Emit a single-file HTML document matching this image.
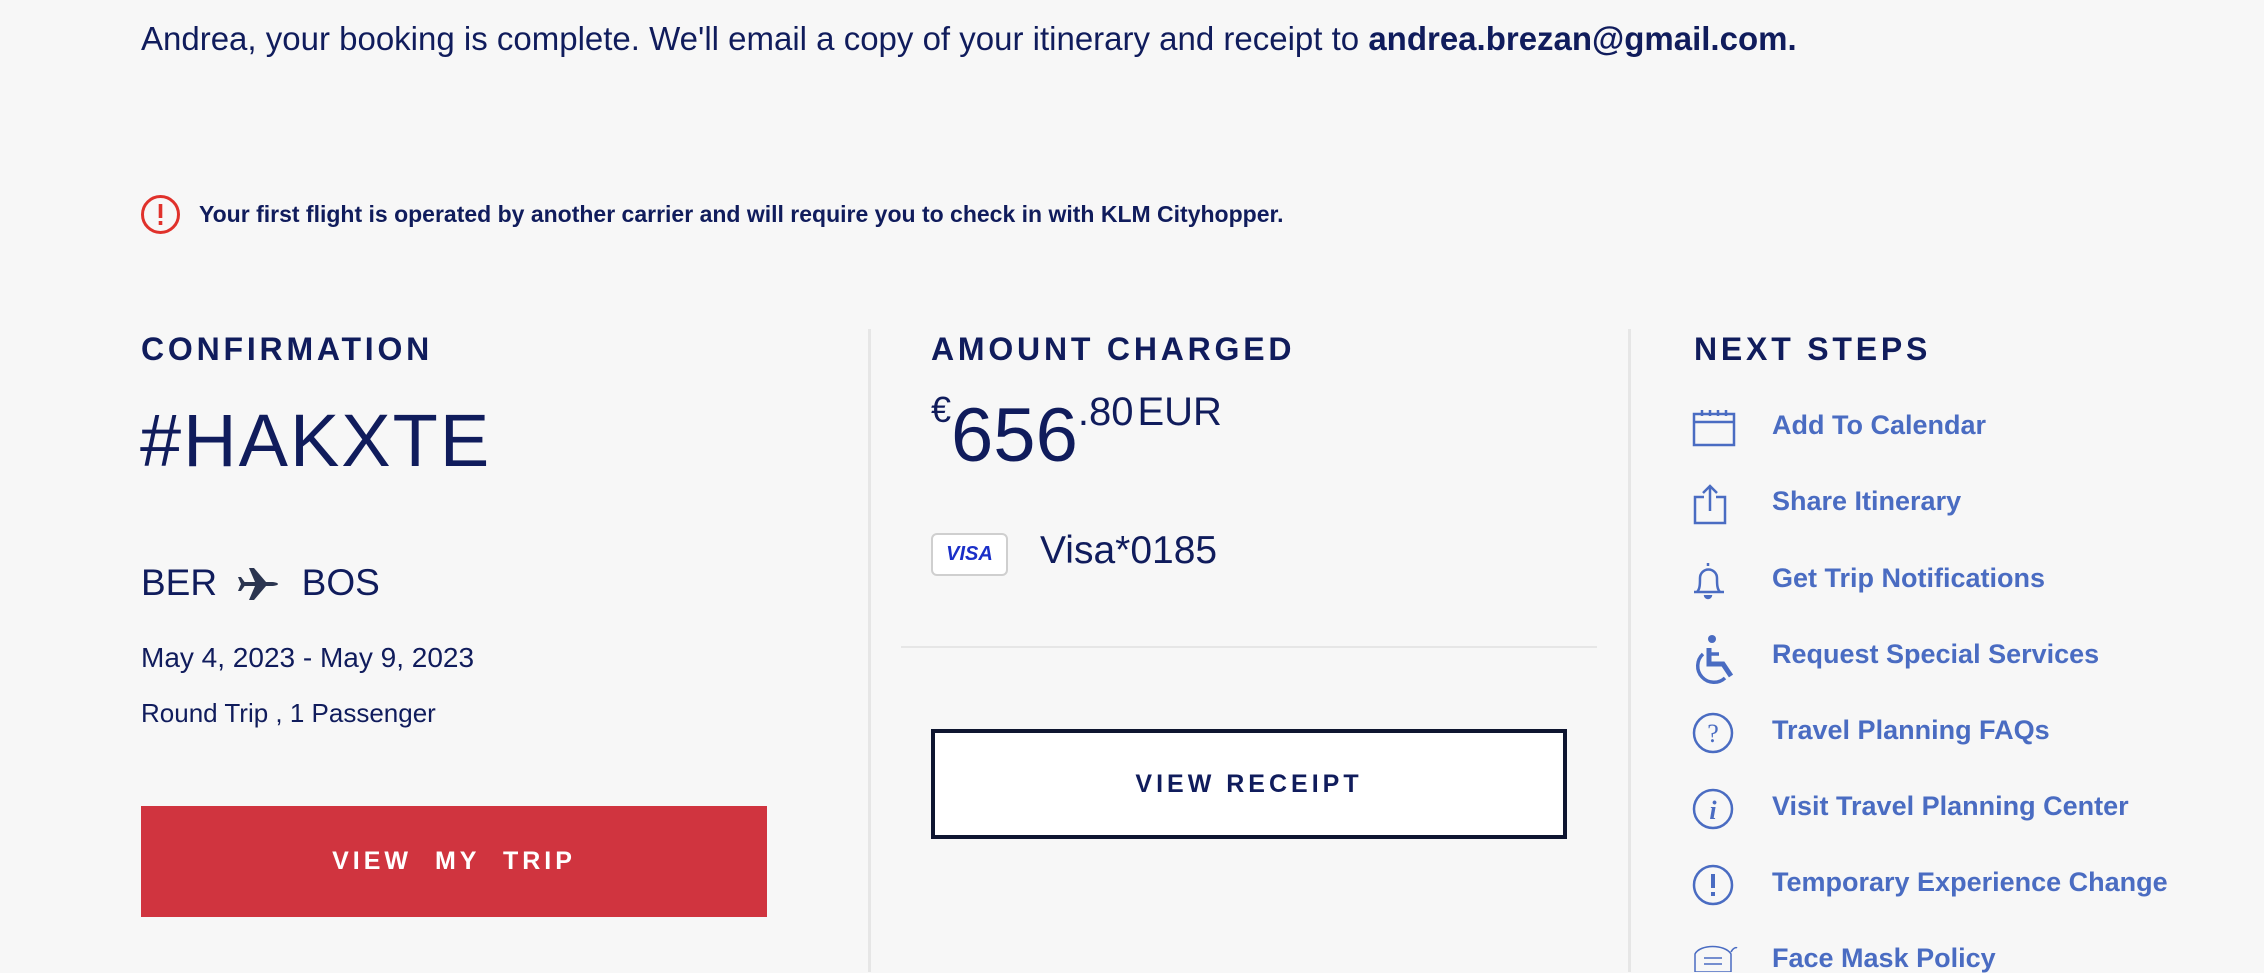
<!DOCTYPE html>
<html><head><meta charset="utf-8"><style>
*{margin:0;padding:0;box-sizing:border-box}
body{width:2264px;height:972px;background:#f7f7f7;font-family:"Liberation Sans",sans-serif;color:#101c5c;position:relative;overflow:hidden}
.a{position:absolute;white-space:nowrap}
.h{font-weight:bold;font-size:32px;letter-spacing:3.8px;line-height:1}
.link{color:#4a6cc2;font-weight:bold;font-size:27px;left:1772px;line-height:1}
.ic{position:absolute;left:1692px}
</style></head><body>
<div class="a" style="left:141px;top:20px;font-size:33px;line-height:38px">Andrea, your booking is complete. We'll email a copy of your itinerary and receipt to <b>andrea.brezan@gmail.com.</b></div>

<svg class="a" style="left:140px;top:194px" width="41" height="41" viewBox="0 0 41 41"><circle cx="20.5" cy="20.5" r="18" fill="none" stroke="#e0312b" stroke-width="3"/><rect x="18.7" y="10" width="3.6" height="14" fill="#e0312b"/><rect x="18.7" y="27" width="3.6" height="4" fill="#e0312b"/></svg>
<div class="a" style="left:199px;top:200px;font-size:23px;font-weight:bold;line-height:28px">Your first flight is operated by another carrier and will require you to check in with KLM Cityhopper.</div>

<div class="a" style="left:868px;top:329px;width:3px;height:643px;background:#e6e6e6"></div>
<div class="a" style="left:1628px;top:329px;width:3px;height:643px;background:#e6e6e6"></div>

<div class="a h" style="left:141px;top:333px">CONFIRMATION</div>
<div class="a" style="left:140px;top:402px;font-size:74px;line-height:78px;letter-spacing:2px">#HAKXTE</div>
<div class="a" style="left:141px;top:563px;font-size:37px;line-height:40px">BER <svg width="44" height="36" viewBox="0 0 44 36" style="vertical-align:-6px;margin:0 10px"><path d="M4 17h30c4 0 7 1 7 2s-3 2-7 2H4z M18 17L12 3h5l12 14z M18 21l-6 14h5l12-14z M4 19l-3-7h3l5 7-5 7H1z" fill="#2b3550"/></svg> BOS</div>
<div class="a" style="left:141px;top:642px;font-size:28px;line-height:32px">May 4, 2023 - May 9, 2023</div>
<div class="a" style="left:141px;top:698px;font-size:26px;line-height:30px">Round Trip , 1 Passenger</div>
<div class="a" style="left:141px;top:806px;width:626px;height:111px;background:#d0343f;color:#fff;font-weight:bold;font-size:25px;letter-spacing:4px;text-align:center;line-height:111px;word-spacing:12px">VIEW MY TRIP</div>

<div class="a h" style="left:931px;top:333px">AMOUNT CHARGED</div>
<div class="a" style="left:931px;top:392px;line-height:1"><span style="font-size:36px;vertical-align:top">€</span><span style="font-size:76px;vertical-align:top;display:inline-block;margin-top:6px">656</span><span style="font-size:40px;vertical-align:top">.80</span><span style="font-size:40px;vertical-align:top;margin-left:4px">EUR</span></div>
<div class="a" style="left:931px;top:533px;width:77px;height:43px;border:2px solid #cfcfcf;border-radius:6px;background:#fff;color:#1a2fc8;font-style:italic;font-weight:bold;font-size:20px;text-align:center;line-height:39px">VISA</div>
<div class="a" style="left:1040px;top:530px;font-size:39px;line-height:42px">Visa*0185</div>
<div class="a" style="left:901px;top:646px;width:696px;height:2px;background:#e6e6e6"></div>
<div class="a" style="left:931px;top:729px;width:636px;height:110px;border:4px solid #0e1530;background:#fff;font-weight:bold;font-size:25px;letter-spacing:4px;text-align:center;line-height:102px">VIEW RECEIPT</div>

<div class="a h" style="left:1694px;top:333px">NEXT STEPS</div>
<svg class="ic" style="top:408px" width="44" height="40" viewBox="0 0 44 40" fill="none" stroke="#4a6cc2" stroke-width="2.5"><rect x="2" y="6" width="40" height="31"/><line x1="2" y1="14" x2="42" y2="14"/><path d="M10 2v6M18 2v6M26 2v6M34 2v6"/></svg>
<div class="a link" style="top:412px">Add To Calendar</div>
<svg class="ic" style="top:483px" width="36" height="42" viewBox="0 0 36 42" fill="none" stroke="#4a6cc2" stroke-width="2.5"><path d="M12 14H3v26h30V14h-9"/><path d="M18 28V3M11 10l7-7 7 7"/></svg>
<div class="a link" style="top:488px">Share Itinerary</div>
<svg class="ic" style="top:560px" width="34" height="40" viewBox="0 0 34 40" fill="none" stroke="#4a6cc2" stroke-width="2.5"><path d="M16 3v3M5 32c3-3 3-8 3-14a8.5 8.5 0 0117 0c0 6 0 11 3 14z M2 32h30"/><path d="M13 35a3 3 0 006 0" fill="#4a6cc2"/></svg>
<div class="a link" style="top:565px">Get Trip Notifications</div>
<svg class="ic" style="top:634px" width="46" height="54" viewBox="0 0 46 54" fill="none" stroke="#4a6cc2" stroke-width="3.5"><circle cx="20" cy="5" r="4" fill="#4a6cc2" stroke="none"/><path d="M17 14v16h14l8 12" stroke-width="5"/><path d="M11 20a14 14 0 1022 24"/><path d="M17 20h10"/></svg>
<div class="a link" style="top:641px">Request Special Services</div>
<svg class="ic" style="top:712px" width="42" height="42" viewBox="0 0 42 42" fill="none" stroke="#4a6cc2" stroke-width="2.5"><circle cx="21" cy="21" r="19"/><text x="21" y="30" font-family="Liberation Serif" font-size="26" fill="#4a6cc2" stroke="none" text-anchor="middle">?</text></svg>
<div class="a link" style="top:717px">Travel Planning FAQs</div>
<svg class="ic" style="top:788px" width="42" height="42" viewBox="0 0 42 42" fill="none" stroke="#4a6cc2" stroke-width="2.5"><circle cx="21" cy="21" r="19"/><text x="21" y="31" font-family="Liberation Serif" font-style="italic" font-weight="bold" font-size="26" fill="#4a6cc2" stroke="none" text-anchor="middle">i</text></svg>
<div class="a link" style="top:793px">Visit Travel Planning Center</div>
<svg class="ic" style="top:864px" width="42" height="42" viewBox="0 0 42 42" fill="none" stroke="#4a6cc2" stroke-width="2.5"><circle cx="21" cy="21" r="19"/><rect x="19" y="10" width="4" height="14" fill="#4a6cc2" stroke="none"/><rect x="19" y="28" width="4" height="4" fill="#4a6cc2" stroke="none"/></svg>
<div class="a link" style="top:869px">Temporary Experience Change</div>
<svg class="ic" style="top:942px" width="46" height="30" viewBox="0 0 46 30" fill="none" stroke="#4a6cc2" stroke-width="1.5"><path d="M3 12c5-10 30-10 36 0v18H3z M12 16h18M12 22h18M39 10c2-4 5-5 6-4"/></svg>
<div class="a link" style="top:945px">Face Mask Policy</div>
</body></html>
